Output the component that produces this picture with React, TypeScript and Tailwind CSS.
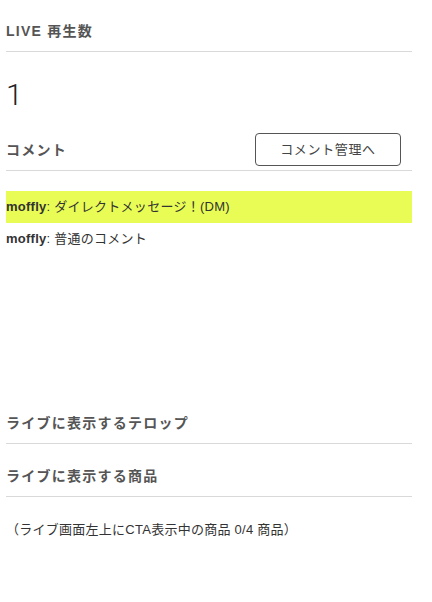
const comments = [
  { user: "moffly", text: "ダイレクトメッセージ！(DM)", dm: true },
  { user: "moffly", text: "普通のコメント", dm: false },
];

function SectionTitle({ children }: { children: React.ReactNode }) {
  return (
    <h2 className="text-[14px] leading-5 font-bold tracking-[0.09em] text-[#555]">
      {children}
    </h2>
  );
}

export default function App() {
  return (
    <div className="min-h-[602px] bg-white font-['Liberation_Sans','Noto_Sans_CJK_JP',sans-serif] text-[#333]">
      <div className="ml-[6px] w-[406px]">
        {/* 再生数 */}
        <div className="border-b border-[#d9d9d9] pt-[21px] pb-[10px]">
          <SectionTitle>LIVE 再生数</SectionTitle>
        </div>
        <p className="mt-[25px] font-['Roboto',sans-serif] text-[30px] leading-9 font-light text-[#222]">
          1
        </p>

        {/* コメント */}
        <div className="mt-[20px] flex items-center justify-between border-b border-[#d9d9d9] pb-[4px]">
          <SectionTitle>コメント</SectionTitle>
          <button className="mr-[11px] h-[33px] w-[146px] rounded-[4px] border border-[#555] text-[13px] tracking-[0.05em] text-[#444]">
            コメント管理へ
          </button>
        </div>
        <ul className="mt-[20px] h-[200px]">
          {comments.map((c, i) => (
            <li
              key={i}
              className={
                "flex h-8 items-center text-[13px] tracking-[0.02em] " +
                (c.dm ? "bg-[#e8fc55]" : "")
              }
            >
              <span className="font-bold">{c.user}</span>
              <span>: {c.text}</span>
            </li>
          ))}
        </ul>

        {/* テロップ */}
        <div className="mt-[22px] border-b border-[#d9d9d9] pb-[10px]">
          <SectionTitle>ライブに表示するテロップ</SectionTitle>
        </div>

        {/* 商品 */}
        <div className="mt-[22px] border-b border-[#d9d9d9] pb-[10px]">
          <SectionTitle>ライブに表示する商品</SectionTitle>
        </div>
        <p className="mt-[23px] text-[13px] leading-5 tracking-[0.02em]">
          （ライブ画面左上にCTA表示中の商品 0/4 商品）
        </p>
      </div>
    </div>
  );
}
